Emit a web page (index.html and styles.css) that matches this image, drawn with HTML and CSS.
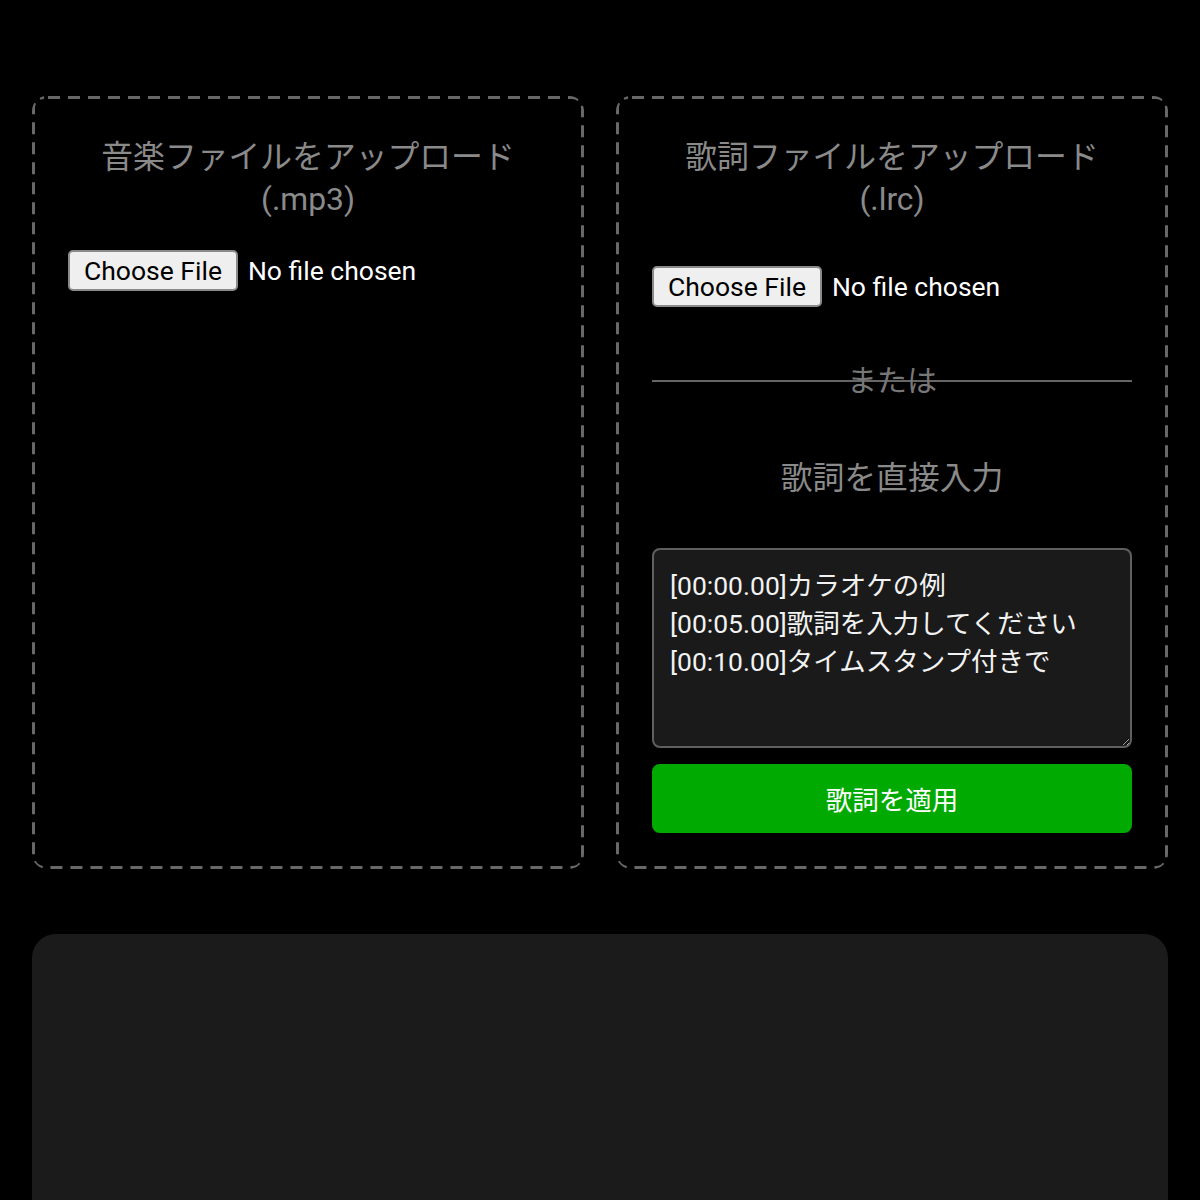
FILE: index.html
```html
<!DOCTYPE html>
<html lang="ja">
<head>
<meta charset="utf-8">
<title>カラオケ</title>
<link rel="stylesheet" href="styles.css">
</head>
<body>
<div class="page">
  <div class="uploads">
    <section class="box">
      <h3 class="box-title">音楽ファイルをアップロード<br>(.mp3)</h3>
      <input class="file" type="file" accept=".mp3">
    </section>
    <section class="box">
      <h3 class="box-title">歌詞ファイルをアップロード<br>(.lrc)</h3>
      <input class="file file-lrc" type="file" accept=".lrc">
      <div class="divider"><span>または</span></div>
      <h3 class="box-title sub">歌詞を直接入力</h3>
      <textarea class="lyrics">[00:00.00]カラオケの例
[00:05.00]歌詞を入力してください
[00:10.00]タイムスタンプ付きで</textarea>
      <button class="apply" type="button">歌詞を適用</button>
    </section>
  </div>
  <div class="player"></div>
</div>
</body>
</html>
```
FILE: styles.css
```css
html, body {
  margin: 0;
  background: #000;
}
body {
  font-family: Roboto, "Noto Sans CJK JP", sans-serif;
  color: #fff;
}
.page {
  padding: 96px 32px 0;
}
.uploads {
  display: grid;
  grid-template-columns: minmax(0, 1fr) minmax(0, 1fr);
  gap: 32px;
}
.box {
  min-width: 0;
  border-radius: 15px;
  padding: 36px;
  display: flex;
  flex-direction: column;
  background-image: url("data:image/svg+xml,%3Csvg xmlns='http://www.w3.org/2000/svg' width='100%25' height='100%25'%3E%3Crect x='0' y='0' width='100%25' height='100%25' rx='12' ry='12' fill='none' stroke='%23686868' stroke-width='6' stroke-dasharray='12 8' stroke-dashoffset='-4'/%3E%3C/svg%3E");
  background-repeat: no-repeat;
}
.box-title {
  margin: 4px 0 30px;
  font-size: 31.8px;
  line-height: 42px;
  font-weight: 400;
  color: #8a8a8a;
  text-align: center;
}
.file {
  display: block;
  font-family: Roboto, "Noto Sans CJK JP", sans-serif;
  font-size: 26.5px;
  color: #fff;
  height: 41px;
  margin: 0;
}
.file::file-selector-button {
  box-sizing: border-box;
  height: 41px;
  padding: 0 14px;
  margin: 0 10px 0 0;
  font-family: Roboto, "Noto Sans CJK JP", sans-serif;
  font-size: 26.5px;
  color: #000;
  background: #efefef;
  border: 2px solid #8a8a8a;
  border-radius: 5px;
}
.file-lrc {
  margin-top: 16px;
}
.divider {
  margin-top: 54px;
  height: 40px;
  line-height: 40px;
  text-align: center;
  font-size: 30px;
  color: #777;
  background: linear-gradient(#666, #666) center / 100% 2px no-repeat;
}
.box-title.sub {
  margin: 56px 0 49px;
}
.lyrics {
  box-sizing: border-box;
  display: block;
  width: 100%;
  height: 200px;
  margin: 0;
  padding: 17px 16px;
  background: #1a1a1a;
  color: #f2f2f2;
  border: 2px solid #5f5f5f;
  border-radius: 8px;
  font-family: Roboto, "Noto Sans CJK JP", sans-serif;
  font-size: 26.5px;
  line-height: 38px;
  resize: vertical;
}
.apply {
  display: block;
  margin-top: 16px;
  height: 69px;
  width: 100%;
  border: none;
  border-radius: 8px;
  background: #00aa00;
  color: #fff;
  font-family: Roboto, "Noto Sans CJK JP", sans-serif;
  font-size: 26.5px;
}
.player {
  margin-top: 65px;
  height: 400px;
  background: #1b1b1b;
  border-radius: 24px;
}
```
